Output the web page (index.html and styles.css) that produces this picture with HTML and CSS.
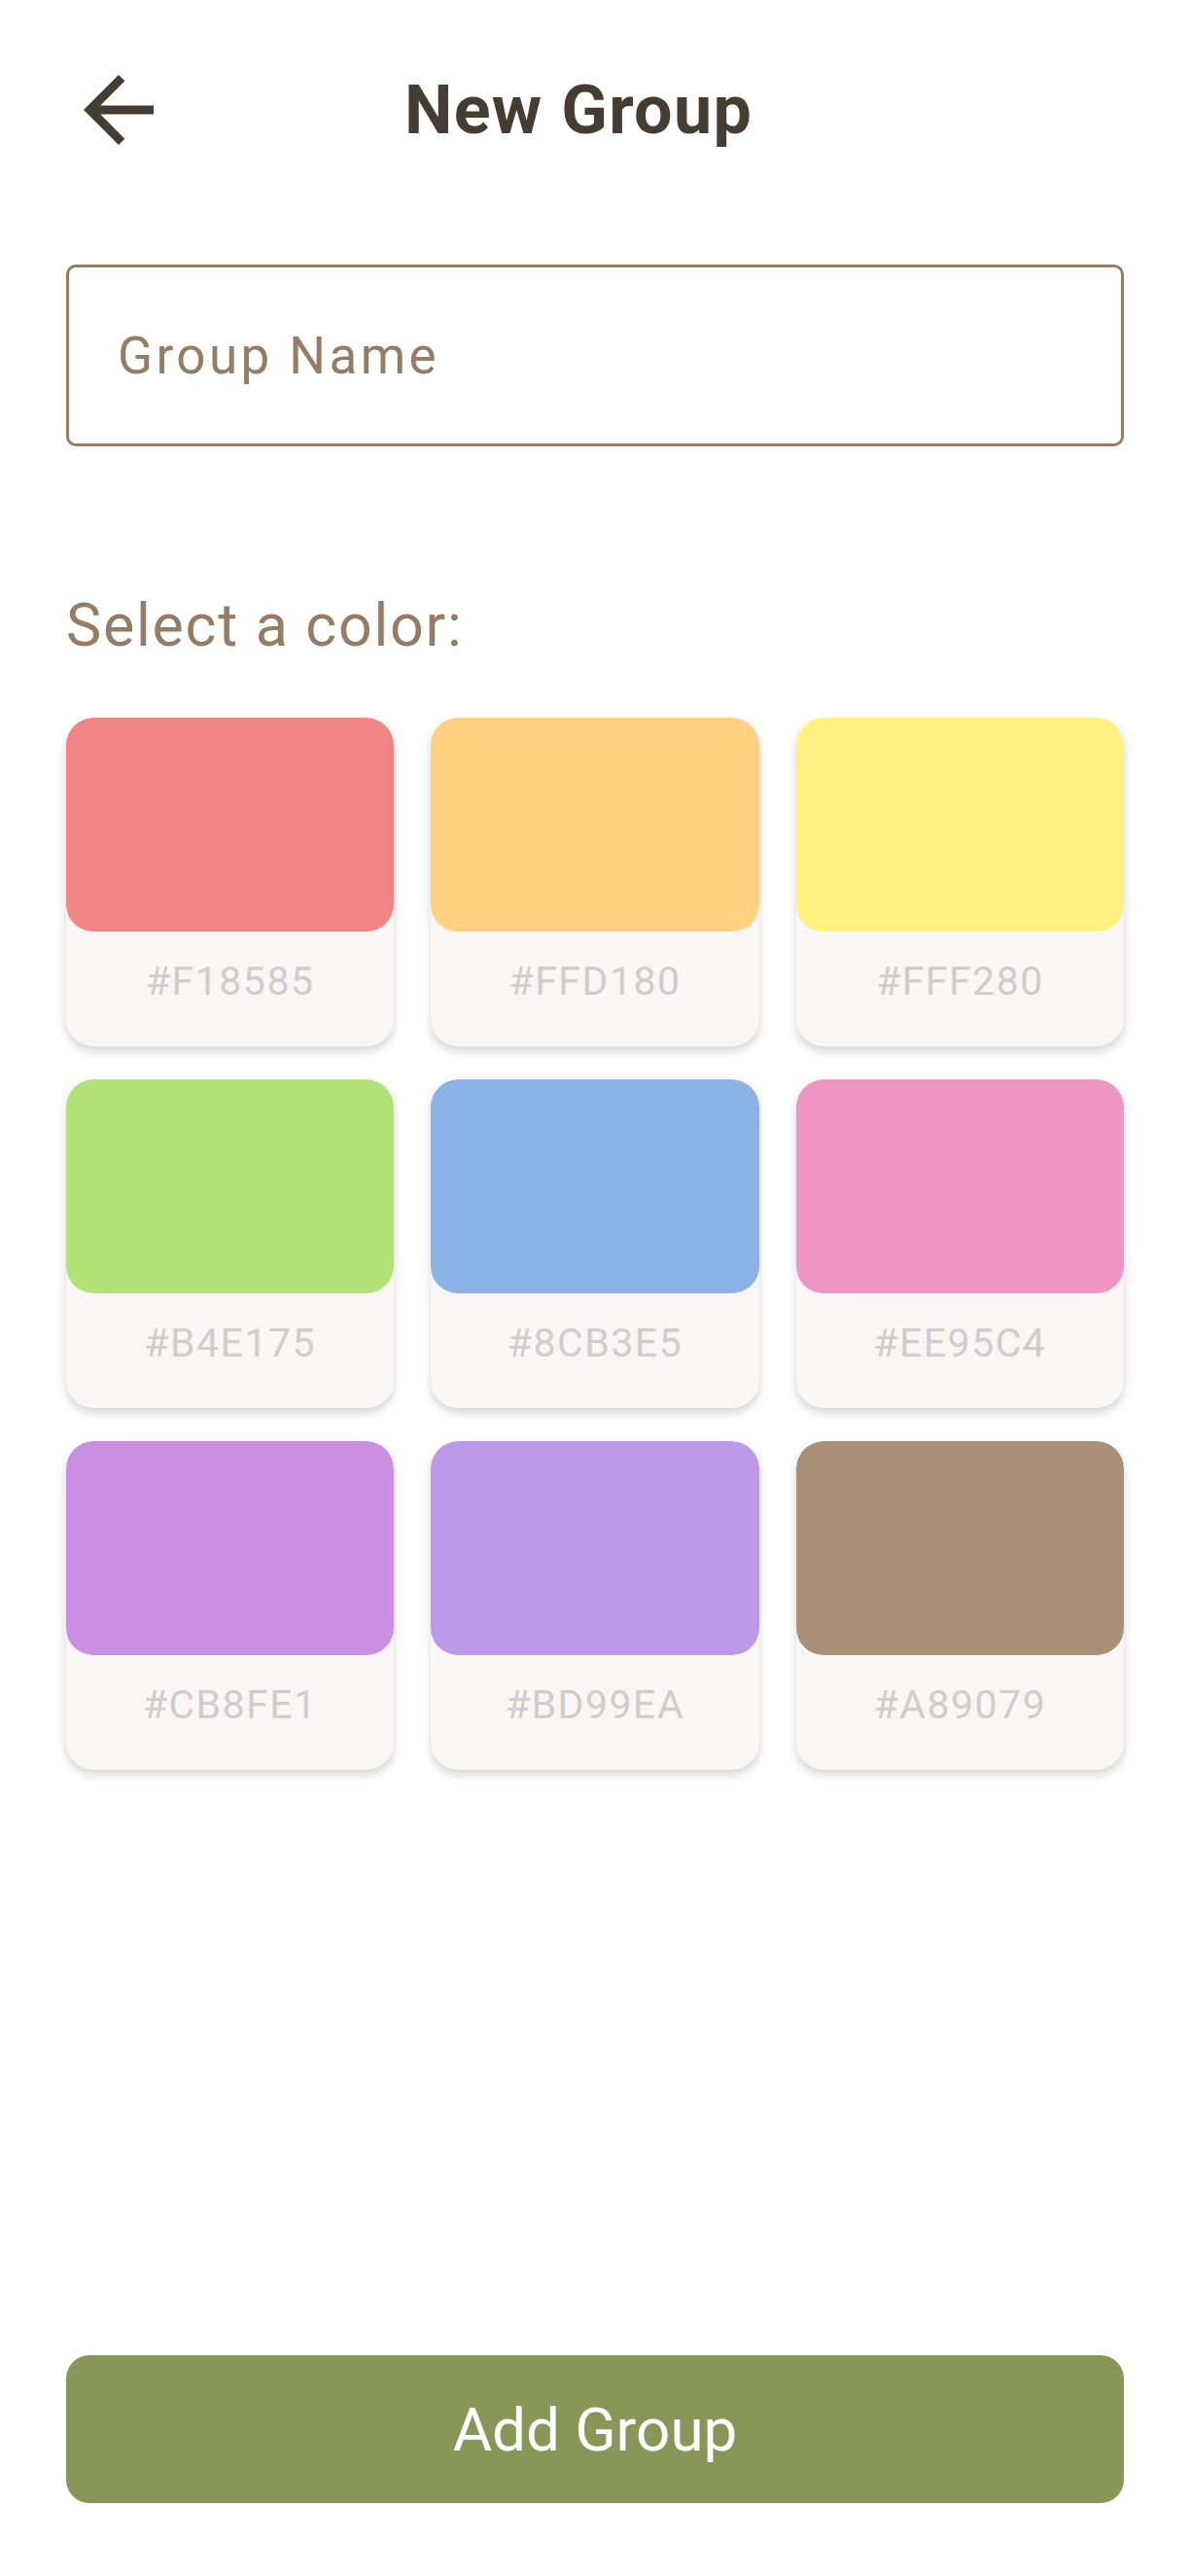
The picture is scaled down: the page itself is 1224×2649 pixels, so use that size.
FILE: index.html
```html
<!DOCTYPE html>
<html lang="en">
<head>
<meta charset="utf-8">
<title>New Group</title>
<link rel="stylesheet" href="styles.css">
</head>
<body>
<div class="page">
  <header class="topbar">
    <svg class="back" viewBox="0 0 24 24" width="108" height="108" aria-label="Back">
      <path d="M20 11H7.83l5.59-5.59L12 4l-8 8 8 8 1.41-1.41L7.83 13H20v-2z"/>
    </svg>
    <h1 class="title">New Group</h1>
  </header>

  <div class="field">
    <span class="placeholder">Group Name</span>
  </div>

  <p class="section-label">Select a color:</p>

  <div class="grid">
    <div class="card"><div class="swatch c1"></div><div class="hex">#F18585</div></div>
    <div class="card"><div class="swatch c2"></div><div class="hex">#FFD180</div></div>
    <div class="card"><div class="swatch c3"></div><div class="hex">#FFF280</div></div>
    <div class="card"><div class="swatch c4"></div><div class="hex">#B4E175</div></div>
    <div class="card"><div class="swatch c5"></div><div class="hex">#8CB3E5</div></div>
    <div class="card"><div class="swatch c6"></div><div class="hex">#EE95C4</div></div>
    <div class="card"><div class="swatch c7"></div><div class="hex">#CB8FE1</div></div>
    <div class="card"><div class="swatch c8"></div><div class="hex">#BD99EA</div></div>
    <div class="card"><div class="swatch c9"></div><div class="hex">#A89079</div></div>
  </div>

  <button class="add-btn" type="button">Add Group</button>
</div>
</body>
</html>
```
FILE: styles.css
```css
* { box-sizing: border-box; }
html, body {
  margin: 0;
  padding: 0;
  background: #ffffff;
}
body {
  font-family: Roboto, "Liberation Sans", sans-serif;
}
.page {
  width: 1224px;
  height: 2649px;
  padding: 0 68px 0 68px;
  display: flex;
  flex-direction: column;
}
.topbar {
  display: flex;
  align-items: center;
  height: 108px;
  margin-top: 59px;
}
.back {
  display: block;
  flex: 0 0 108px;
  fill: #463d32;
}
.title {
  margin: 0 0 0 240px;
  font-size: 70px;
  font-weight: 700;
  line-height: 108px;
  color: #463d32;
  letter-spacing: 1.3px;
}
.field {
  margin-top: 105px;
  height: 187px;
  border: 3px solid #957d65;
  border-radius: 10px;
  display: flex;
  align-items: center;
  padding-left: 50px;
}
.placeholder {
  font-size: 53px;
  color: #957d65;
  letter-spacing: 3.4px;
}
.section-label {
  margin: 148px 0 0 0;
  font-size: 61px;
  line-height: 72px;
  color: #957d65;
  letter-spacing: 1.7px;
}
.grid {
  margin-top: 59px;
  display: grid;
  grid-template-columns: repeat(3, 1fr);
  column-gap: 38px;
  row-gap: 34px;
}
.card {
  height: 338px;
  background: #f9f6f5;
  border-radius: 28px;
  box-shadow: 0 5px 10px rgba(0, 0, 0, 0.17);
  overflow: hidden;
}
.swatch {
  height: 220px;
  border-radius: 28px;
}
.hex {
  margin-top: 27px;
  font-size: 41px;
  line-height: 48px;
  text-align: center;
  color: #d0cdcb;
  letter-spacing: 1.5px;
}
.c1 { background: #f18585; }
.c2 { background: #ffd180; }
.c3 { background: #fff280; }
.c4 { background: #b4e175; }
.c5 { background: #8cb3e5; }
.c6 { background: #ee95c4; }
.c7 { background: #cb8fe1; }
.c8 { background: #bd99ea; }
.c9 { background: #a89079; }
.add-btn {
  margin-top: auto;
  margin-bottom: 75px;
  height: 152px;
  width: 100%;
  border: none;
  border-radius: 24px;
  background: #8a9558;
  color: #ffffff;
  font-family: Roboto, "Liberation Sans", sans-serif;
  font-size: 62px;
  padding: 0;
}
```
